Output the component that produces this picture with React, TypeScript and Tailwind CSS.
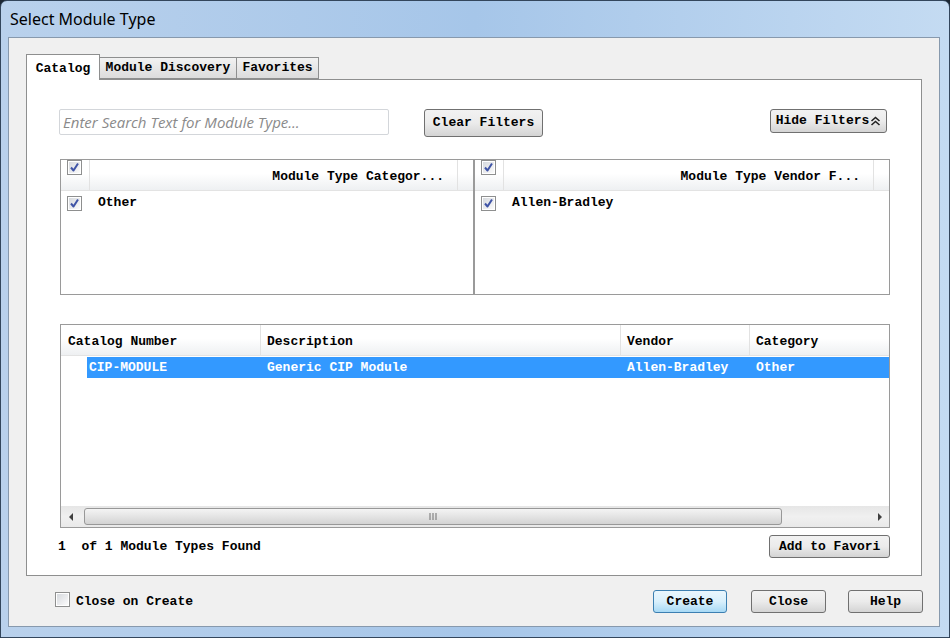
import React from 'react';

function Check({ checked = true }: { checked?: boolean }) {
  return (
    <span className="inline-flex h-[15px] w-[15px] shrink-0 items-center justify-center border border-[#8e8f8f] bg-white p-[1px]">
      <span className="flex h-full w-full items-center justify-center bg-gradient-to-br from-[#d6d9de] to-[#fbfbfb]">
        {checked && (
          <svg width="11" height="11" viewBox="0 0 11 11">
            <path d="M2 5.5 L4.5 8.5 L9 1.5" fill="none" stroke="#3f54a6" strokeWidth="2" strokeLinejoin="round" />
          </svg>
        )}
      </span>
    </span>
  );
}

function Button({ children, className = '', focused = false }: { children: React.ReactNode; className?: string; focused?: boolean }) {
  return (
    <button
      className={`flex items-center justify-center rounded-[3px] border text-[13px] font-bold text-black ${
        focused
          ? 'border-[#3c7fb1] bg-gradient-to-b from-[#eaf6fd] via-[#d9f0fc] to-[#a7d9f5]'
          : 'border-[#707070] bg-gradient-to-b from-[#f2f2f2] via-[#ebebeb] to-[#d4d4d4]'
      } ${className}`}
    >
      {children}
    </button>
  );
}

function FilterPanel({ title, item, className = '' }: { title: string; item: string; className?: string }) {
  return (
    <div className={`flex flex-col border border-[#9a9a9a] bg-white ${className}`}>
      <div className="flex h-[31px] border-b border-[#e3e3e3] bg-gradient-to-b from-white from-45% to-[#eef0f2]">
        <div className="w-[29px] border-r border-[#e2e2e2] pl-[6px]">
          <Check />
        </div>
        <div className="flex flex-1 items-end justify-end border-r border-[#e2e2e2] pb-[4px] pr-[13px]">{title}</div>
        <div className="w-[15px]" />
      </div>
      <div className="flex h-[23px] items-center pl-[6px] pt-[1px]">
        <Check />
        <span className="ml-[16px]">{item}</span>
      </div>
    </div>
  );
}

function Triangle({ dir }: { dir: 'left' | 'right' }) {
  return (
    <svg width="5" height="8" viewBox="0 0 5 8">
      {dir === 'left' ? <path d="M4 0 L0 4 L4 8 Z" fill="#404040" /> : <path d="M1 0 L5 4 L1 8 Z" fill="#404040" />}
    </svg>
  );
}

export default function App() {
  return (
    <div className="h-[638px] w-[950px] overflow-hidden bg-[#1c2733] font-['Liberation_Mono',monospace] text-[13px] font-bold text-black">
      <div className="flex h-full flex-col rounded-t-[7px] border border-[#33465c] bg-gradient-to-r from-[#b9d1ec] via-[#a6c6e9] to-[#c4dbf2] pb-[10px] pl-[7px] pr-[9px]">
        {/* title bar */}
        <div className="flex h-[36px] items-center pl-[2px] font-['Noto_Sans',sans-serif] text-[16px] font-normal">
          Select Module Type
        </div>

        {/* client area */}
        <div className="flex flex-1 flex-col border border-[#8799ad] bg-[#f0f0f0] px-[17px]">
          {/* tabs */}
          <div className="mt-[15px] flex h-[26px] items-end">
            <div className="relative z-10 -mb-px flex h-[26px] w-[74px] items-start justify-center border border-b-0 border-[#8e8f8f] bg-white pt-[4px]">
              Catalog
            </div>
            <div className="flex h-[22px] w-[137px] items-center justify-center border border-l-0 border-[#8e8f8f] bg-gradient-to-b from-[#f2f2f2] to-[#dcdcdc]">
              Module Discovery
            </div>
            <div className="flex h-[22px] w-[82px] items-center justify-center border border-l-0 border-[#8e8f8f] bg-gradient-to-b from-[#f2f2f2] to-[#dcdcdc]">
              Favorites
            </div>
          </div>

          {/* tab panel */}
          <div className="flex h-[497px] flex-col border border-[#8e8f8f] bg-white pl-[32px] pr-[31px] pt-[29px]">
            <div className="flex h-[29px] items-start">
              <div className="flex h-[26px] w-[330px] items-center rounded-[2px] border border-[#d3d6da] pl-[3px] font-['Open_Sans',sans-serif] text-[15px] font-normal italic text-[#8a8a8a]">
                Enter Search Text for Module Type...
              </div>
              <Button className="ml-[35px] h-[28px] w-[119px]">Clear Filters</Button>
              <Button className="ml-auto mr-[3px] h-[24px] w-[117px]">
                Hide Filters
                <svg width="11" height="10" viewBox="0 0 11 10" className="ml-[1px]">
                  <path d="M1.5 5 L5.5 1.5 L9.5 5 M1.5 9 L5.5 5.5 L9.5 9" fill="none" stroke="#222" strokeWidth="1.6" />
                </svg>
              </Button>
            </div>

            {/* filters */}
            <div className="ml-[1px] mt-[21px] flex h-[136px]">
              <FilterPanel title="Module Type Categor..." item="Other" className="w-[414px]" />
              <FilterPanel title="Module Type Vendor F..." item="Allen-Bradley" className="flex-1" />
            </div>

            {/* results grid */}
            <div className="ml-[1px] mt-[29px] flex h-[204px] flex-col border border-[#9a9a9a] bg-white">
              <div className="flex h-[31px] border-b border-[#e3e3e3] bg-gradient-to-b from-white from-45% to-[#eef0f2]">
                <div className="flex w-[200px] items-center border-r border-[#e2e2e2] pl-[7px] pt-[3px]">Catalog Number</div>
                <div className="flex w-[360px] items-center border-r border-[#e2e2e2] pl-[6px] pt-[3px]">Description</div>
                <div className="flex w-[129px] items-center border-r border-[#e2e2e2] pl-[6px] pt-[3px]">Vendor</div>
                <div className="flex flex-1 items-center pl-[6px] pt-[3px]">Category</div>
              </div>
              <div className="ml-[26px] mt-[1px] flex h-[21px] items-center bg-[#3399ff] text-white">
                <div className="w-[174px] pl-[2px]">CIP-MODULE</div>
                <div className="w-[360px] pl-[6px]">Generic CIP Module</div>
                <div className="w-[129px] pl-[6px]">Allen-Bradley</div>
                <div className="flex-1 pl-[6px]">Other</div>
              </div>
              <div className="flex-1" />
              {/* horizontal scrollbar */}
              <div className="flex h-[21px] items-center bg-gradient-to-b from-[#e6e6e6] via-[#f0f0f0] to-[#e9e9e9]">
                <div className="flex w-[20px] items-center justify-center">
                  <Triangle dir="left" />
                </div>
                <div className="ml-[3px] flex h-[17px] w-[698px] items-center justify-center rounded-[3px] border border-[#989898] bg-gradient-to-b from-[#f4f4f4] via-[#e4e4e4] to-[#d3d3d3]">
                  <svg width="8" height="7" viewBox="0 0 8 7">
                    <path d="M1 0 V7 M4 0 V7 M7 0 V7" stroke="#707070" strokeWidth="1" />
                  </svg>
                </div>
                <div className="flex-1" />
                <div className="flex w-[20px] items-center justify-center">
                  <Triangle dir="right" />
                </div>
              </div>
            </div>

            {/* status row */}
            <div className="mt-[7px] flex h-[23px] items-center">
              <span className="-ml-[1px] whitespace-pre">1  of 1 Module Types Found</span>
              <Button className="ml-auto h-[23px] w-[121px] justify-start pl-[9px]">Add to Favori</Button>
            </div>
          </div>

          {/* dialog buttons */}
          <div className="mt-[14px] flex h-[23px] items-center">
            <div className="ml-[29px]">
              <Check checked={false} />
            </div>
            <span className="ml-[6px]">Close on Create</span>
            <Button focused className="ml-auto h-[23px] w-[74px]">Create</Button>
            <Button className="ml-[24px] h-[23px] w-[75px]">Close</Button>
            <Button className="ml-[22px] -mr-[1px] h-[23px] w-[75px]">Help</Button>
          </div>
        </div>
      </div>
    </div>
  );
}
